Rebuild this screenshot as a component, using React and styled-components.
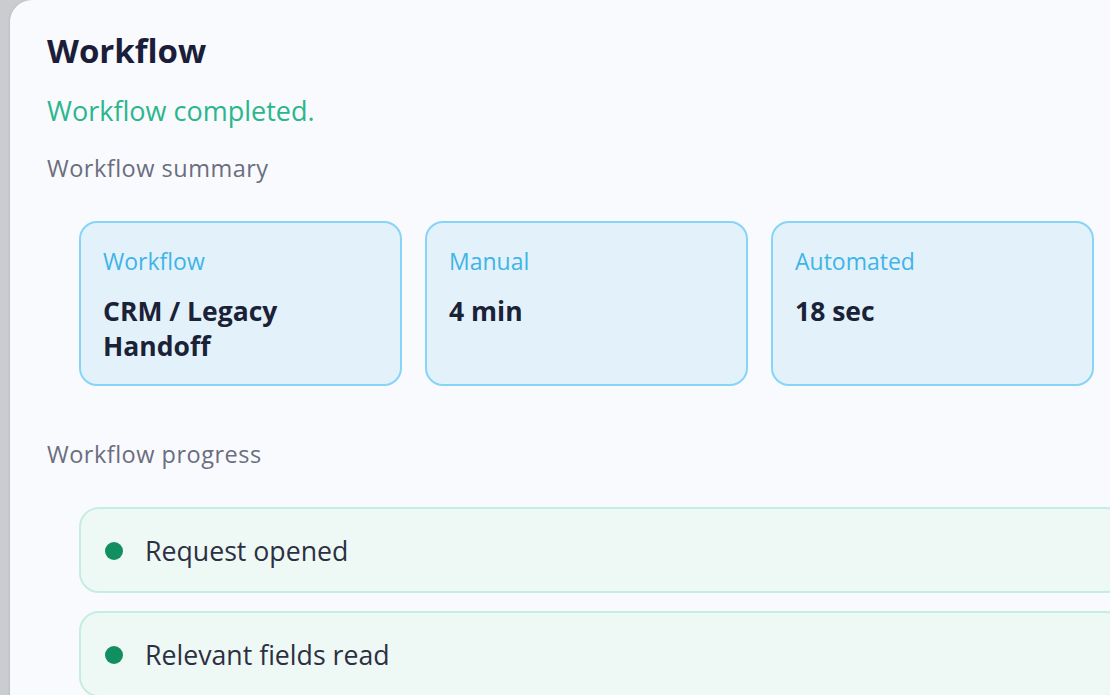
import React from "react";
import styled, { createGlobalStyle } from "styled-components";

const GlobalStyle = createGlobalStyle`
  html, body {
    margin: 0;
    padding: 0;
    background: #cfd0d2;
    overflow: hidden;
  }
  body {
    font-family: "Open Sans", "Noto Sans", sans-serif;
    -webkit-font-smoothing: antialiased;
  }
`;

const Backdrop = styled.div`
  min-height: 695px;
  padding-left: 10px;
  background: linear-gradient(90deg, #cbcccf 0%, #d3d4d6 100%);
`;

const Panel = styled.section`
  width: 1153px;
  min-height: 760px;
  box-sizing: border-box;
  padding: 31px 37px 40px;
  background: #f9fafd;
  border-radius: 22px 0 0 0;
  box-shadow: -1px 0 2px rgba(150, 170, 190, 0.35);
`;

const Title = styled.h1`
  margin: 0;
  font-size: 33px;
  line-height: 40px;
  font-weight: 700;
  color: #1b1e3a;
`;

const Status = styled.p`
  margin: 24px 0 0;
  font-size: 27px;
  line-height: 32px;
  color: #2bb68c;
`;

const SectionLabel = styled.h2`
  margin: ${(p) => p.$top}px 0 0;
  font-size: 23.5px;
  line-height: 28px;
  letter-spacing: 0.5px;
  font-weight: 400;
  color: #6a6e7e;
`;

const SummaryGrid = styled.div`
  display: grid;
  grid-template-columns: repeat(3, 1fr);
  gap: 23px;
  margin: 39px 32px 0;
`;

const StatCard = styled.div`
  box-sizing: border-box;
  min-height: 164px;
  padding: 24px 22px 20px;
  background: #e3f2fa;
  border: 2px solid #86d5f6;
  border-radius: 18px;
`;

const StatLabel = styled.div`
  font-size: 23px;
  line-height: 28px;
  color: #3fb4e8;
`;

const StatValue = styled.div`
  margin-top: 19px;
  font-size: 26.5px;
  line-height: 35px;
  font-weight: 700;
  color: #1b2136;
  max-width: 220px;
`;

const StepList = styled.div`
  display: flex;
  flex-direction: column;
  gap: 18px;
  margin: 39px 0 0 32px;
`;

const StepRow = styled.div`
  box-sizing: border-box;
  height: 86px;
  display: flex;
  align-items: center;
  gap: 22px;
  padding: 2px 24px 0;
  background: #eef9f6;
  border: 2px solid #c5eee1;
  border-radius: 20px;
`;

const Dot = styled.span`
  flex: none;
  width: 18px;
  height: 18px;
  border-radius: 50%;
  background: ${(p) => (p.$done ? "#118f61" : "#b9c2cc")};
`;

const StepText = styled.span`
  font-size: 26.7px;
  line-height: 32px;
  color: #2c3042;
`;

const stats = [
  { label: "Workflow", value: "CRM / Legacy Handoff" },
  { label: "Manual", value: "4 min" },
  { label: "Automated", value: "18 sec" },
];

const steps = [
  { text: "Request opened", done: true },
  { text: "Relevant fields read", done: true },
];

export default function App() {
  return (
    <>
      <GlobalStyle />
      <Backdrop>
        <Panel>
          <Title>Workflow</Title>
          <Status>Workflow completed.</Status>
          <SectionLabel $top={27}>Workflow summary</SectionLabel>
          <SummaryGrid>
            {stats.map((s) => (
              <StatCard key={s.label}>
                <StatLabel>{s.label}</StatLabel>
                <StatValue>{s.value}</StatValue>
              </StatCard>
            ))}
          </SummaryGrid>
          <SectionLabel $top={54}>Workflow progress</SectionLabel>
          <StepList>
            {steps.map((s) => (
              <StepRow key={s.text}>
                <Dot $done={s.done} />
                <StepText>{s.text}</StepText>
              </StepRow>
            ))}
          </StepList>
        </Panel>
      </Backdrop>
    </>
  );
}
